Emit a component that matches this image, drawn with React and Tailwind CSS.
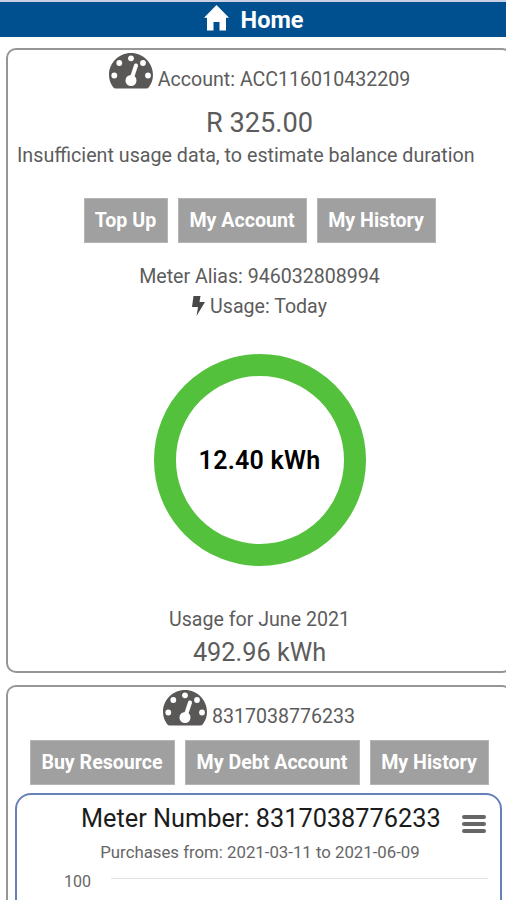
import React from 'react';

const accountActions = [
  { label: 'Top Up', width: 'w-[84px]' },
  { label: 'My Account', width: 'w-[129px]' },
  { label: 'My History', width: 'w-[119px]' }
];

const meterActions = [
  { label: 'Buy Resource', width: 'w-[145px]' },
  { label: 'My Debt Account', width: 'w-[175px]' },
  { label: 'My History', width: 'w-[119px]' }
];

const GaugeIcon = () => (
  <svg className="shrink-0" width="44" height="36" viewBox="0 0 44 36">
    <path d="M7 35.500Q5 35.500 4 34C1.500 30.500 0 26.500 0 22C0 9.800 9.800 0 22 0s22 9.800 22 22c0 4.500-1.500 8.500-4 12Q39 35.500 37 35.500z" fill="#5a5757" />
    <g fill="#fff">
      <circle cx="5.300" cy="22.500" r="2.900" />
      <circle cx="10.300" cy="10" r="2.900" />
      <circle cx="22" cy="5.300" r="2.900" />
      <circle cx="34" cy="10" r="2.900" />
      <circle cx="39" cy="22.500" r="2.900" />
      <circle cx="22" cy="27.500" r="5.500" />
    </g>
    <path d="M22.500 26L27 12.500" stroke="#fff" strokeWidth="4" strokeLinecap="round" />
  </svg>
);

const HomeIcon = () => (
  <svg className="-mt-[3px]" width="25" height="26" viewBox="0 0 25 26">
    <path d="M12.500 0L25 12.800h-3V25.500h-6.500v-8.500h-6v8.500H3V12.800H0z" fill="#fff" />
  </svg>
);

const BoltIcon = () => (
  <svg className="-mt-[2px]" width="13" height="20" viewBox="0 0 13 20">
    <path d="M1.500 0H8.500L7.500 6H13L4.500 20L6 11H0z" fill="#484848" />
  </svg>
);

const ActionRow = ({ actions }) => (
  <div className="flex justify-center gap-[10px]">
    {actions.map((action) => (
      <button
        key={action.label}
        className={`${action.width} h-[45px] border border-[#b4b4b4] bg-[#a0a0a0] text-white text-[19.6px] font-bold whitespace-nowrap`}
      >
        {action.label}
      </button>
    ))}
  </div>
);

const App = () => {
  return (
    <div className="w-[506px] h-[900px] overflow-hidden bg-white font-['Roboto',sans-serif] text-[#5c5c5c] text-[19.6px]">
      <div className="h-[2px] bg-[#cbcfe4]" />
      <header className="h-[35px] pl-px bg-[#00508f] flex items-center justify-center gap-[12px] text-white">
        <HomeIcon />
        <h1 className="mt-[3px] text-[23.500px] font-bold leading-none">Home</h1>
      </header>

      <section className="mt-[11px] ml-[6px] w-[506px] h-[625px] pl-px border-2 border-[#969696] rounded-[10px]">
        <div className="h-[40px] mt-[3px] flex justify-center gap-[5px]">
          <GaugeIcon />
          <span className="leading-[53px]">Account: ACC116010432209</span>
        </div>
        <div className="h-[40px] mt-[9px] text-center text-[27.200px] leading-[42px]">R 325.00</div>
        <div className="h-[26px] mt-px pl-[8px] text-[19.700px] leading-[26px] whitespace-nowrap">
          Insufficient usage data, to estimate balance duration
        </div>
        <div className="mt-[29px]">
          <ActionRow actions={accountActions} />
        </div>
        <div className="h-[30px] mt-[19px] text-center leading-[30px]">Meter Alias: 946032808994</div>
        <div className="h-[30px] flex items-center justify-center gap-[5px]">
          <BoltIcon />
          <span>Usage: Today</span>
        </div>
        <div className="mx-auto mt-[32px] size-[212px] pt-[2px] rounded-full border-[22px] border-[#54c13c] flex items-center justify-center text-black text-[25px] font-semibold tracking-[0.25px]">
          12.40 kWh
        </div>
        <div className="h-[30px] mt-[39px] text-center leading-[30px]">Usage for June 2021</div>
        <div className="h-[34px] mt-px text-center text-[25.300px] leading-[34px]">492.96 kWh</div>
      </section>

      <section className="mt-[12px] ml-[6px] w-[506px] h-[240px] border-2 border-b-0 border-[#969696] rounded-t-[10px]">
        <div className="h-[36px] mt-[3px] flex justify-center gap-[5px]">
          <GaugeIcon />
          <span className="leading-[53px]">8317038776233</span>
        </div>
        <div className="mt-[14px]">
          <ActionRow actions={meterActions} />
        </div>
        <div className="mt-[8px] ml-[7px] w-[487px] h-[140px] border-2 border-[#6680b9] rounded-t-[16px] flex flex-col">
          <div className="h-[46px] pl-[64px] pr-[14px] flex items-center justify-between">
            <h2 className="mt-[2px] text-[25.300px] text-[#1c1c1c] whitespace-nowrap">Meter Number: 8317038776233</h2>
            <button className="w-[24px] flex flex-col gap-[3px] mt-[11px]">
              <span className="h-[4px] w-full rounded-full bg-[#666]" />
              <span className="h-[4px] w-full rounded-full bg-[#666]" />
              <span className="h-[4px] w-full rounded-full bg-[#666]" />
            </button>
          </div>
          <div className="h-[24px] pl-[3px] text-center text-[16.800px] leading-[22px] text-[#666]">
            Purchases from: 2021-03-11 to 2021-06-09
          </div>
          <div className="mt-[6px] h-[20px] flex items-start pl-[47px] pr-[12px] gap-[20px] text-[16px] leading-[20px] text-[#666]">
            <span className="mt-px">100</span>
            <div className="flex-1 h-px mt-[7px] bg-[#e2e2e2]" />
          </div>
        </div>
      </section>
    </div>
  );
};

export default App;
